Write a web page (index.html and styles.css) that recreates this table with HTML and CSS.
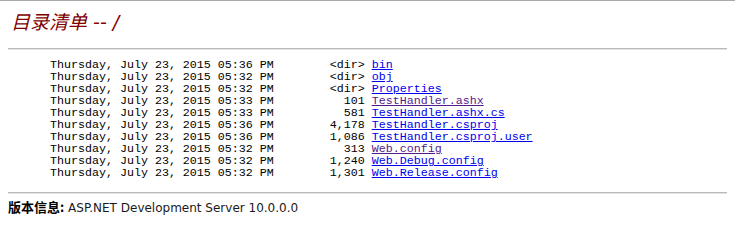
FILE: index.html
```html
<!DOCTYPE html>
<html>
<head>
<meta charset="utf-8">
<title>目录清单 -- /</title>
<link rel="stylesheet" href="styles.css">
</head>
<body>
<h2 class="title"><i>目录清单 -- /</i></h2>
<hr class="rule rule-top">
<pre class="listing">      Thursday, July 23, 2015 05:36 PM        &lt;dir&gt; <a class="lnk" href="bin/">bin</a>
      Thursday, July 23, 2015 05:32 PM        &lt;dir&gt; <a class="lnk" href="obj/">obj</a>
      Thursday, July 23, 2015 05:32 PM        &lt;dir&gt; <a class="lnk" href="Properties/">Properties</a>
      Thursday, July 23, 2015 05:33 PM          101 <a class="lnk visited" href="TestHandler.ashx">TestHandler.ashx</a>
      Thursday, July 23, 2015 05:33 PM          581 <a class="lnk" href="TestHandler.ashx.cs">TestHandler.ashx.cs</a>
      Thursday, July 23, 2015 05:36 PM        4,178 <a class="lnk" href="TestHandler.csproj">TestHandler.csproj</a>
      Thursday, July 23, 2015 05:36 PM        1,086 <a class="lnk" href="TestHandler.csproj.user">TestHandler.csproj.user</a>
      Thursday, July 23, 2015 05:32 PM          313 <a class="lnk visited" href="Web.config">Web.config</a>
      Thursday, July 23, 2015 05:32 PM        1,240 <a class="lnk" href="Web.Debug.config">Web.Debug.config</a>
      Thursday, July 23, 2015 05:32 PM        1,301 <a class="lnk" href="Web.Release.config">Web.Release.config</a></pre>
<hr class="rule rule-bottom">
<p class="version"><b class="version-label">版本信息:</b>&nbsp;ASP.NET Development Server 10.0.0.0</p>
</body>
</html>
```
FILE: styles.css
```css
html {
  border-top: 1px solid #a9a9a9;
  background: #ffffff;
}
body {
  margin: 0 8px;
  font-family: "DejaVu Sans", Verdana, "Noto Sans CJK SC", sans-serif;
  font-size: 10.67px;
  color: #000000;
}
.title {
  margin: 9px 0 0 3px;
  font-family: "DejaVu Sans", "Noto Sans CJK SC", sans-serif;
  font-weight: normal;
  font-size: 19px;
  line-height: 24px;
  color: #800000;
}
.title i {
  font-style: italic;
}
.rule {
  height: 0;
  border: 0;
  border-top: 1px solid #b9b9b9;
  border-bottom: 1px solid #e4e4e4;
  margin: 0;
}
.rule-top {
  margin-top: 14px;
}
.listing {
  margin: 9px 0 0 0;
  font-family: "Liberation Mono", "DejaVu Sans Mono", monospace;
  font-size: 11.67px;
  line-height: 12px;
  color: #000000;
}
.lnk {
  color: #0000ee;
  text-decoration: underline;
}
.lnk.visited {
  color: #551a8b;
}
.rule-bottom {
  margin-top: 13px;
}
.version {
  margin: 5px 0 0 0;
  line-height: 16px;
  font-size: 12px;
  color: #1a1a1a;
}
.version-label {
  font-family: "Noto Sans CJK SC", sans-serif;
  font-size: 13px;
  font-weight: bold;
  color: #000000;
}
```
